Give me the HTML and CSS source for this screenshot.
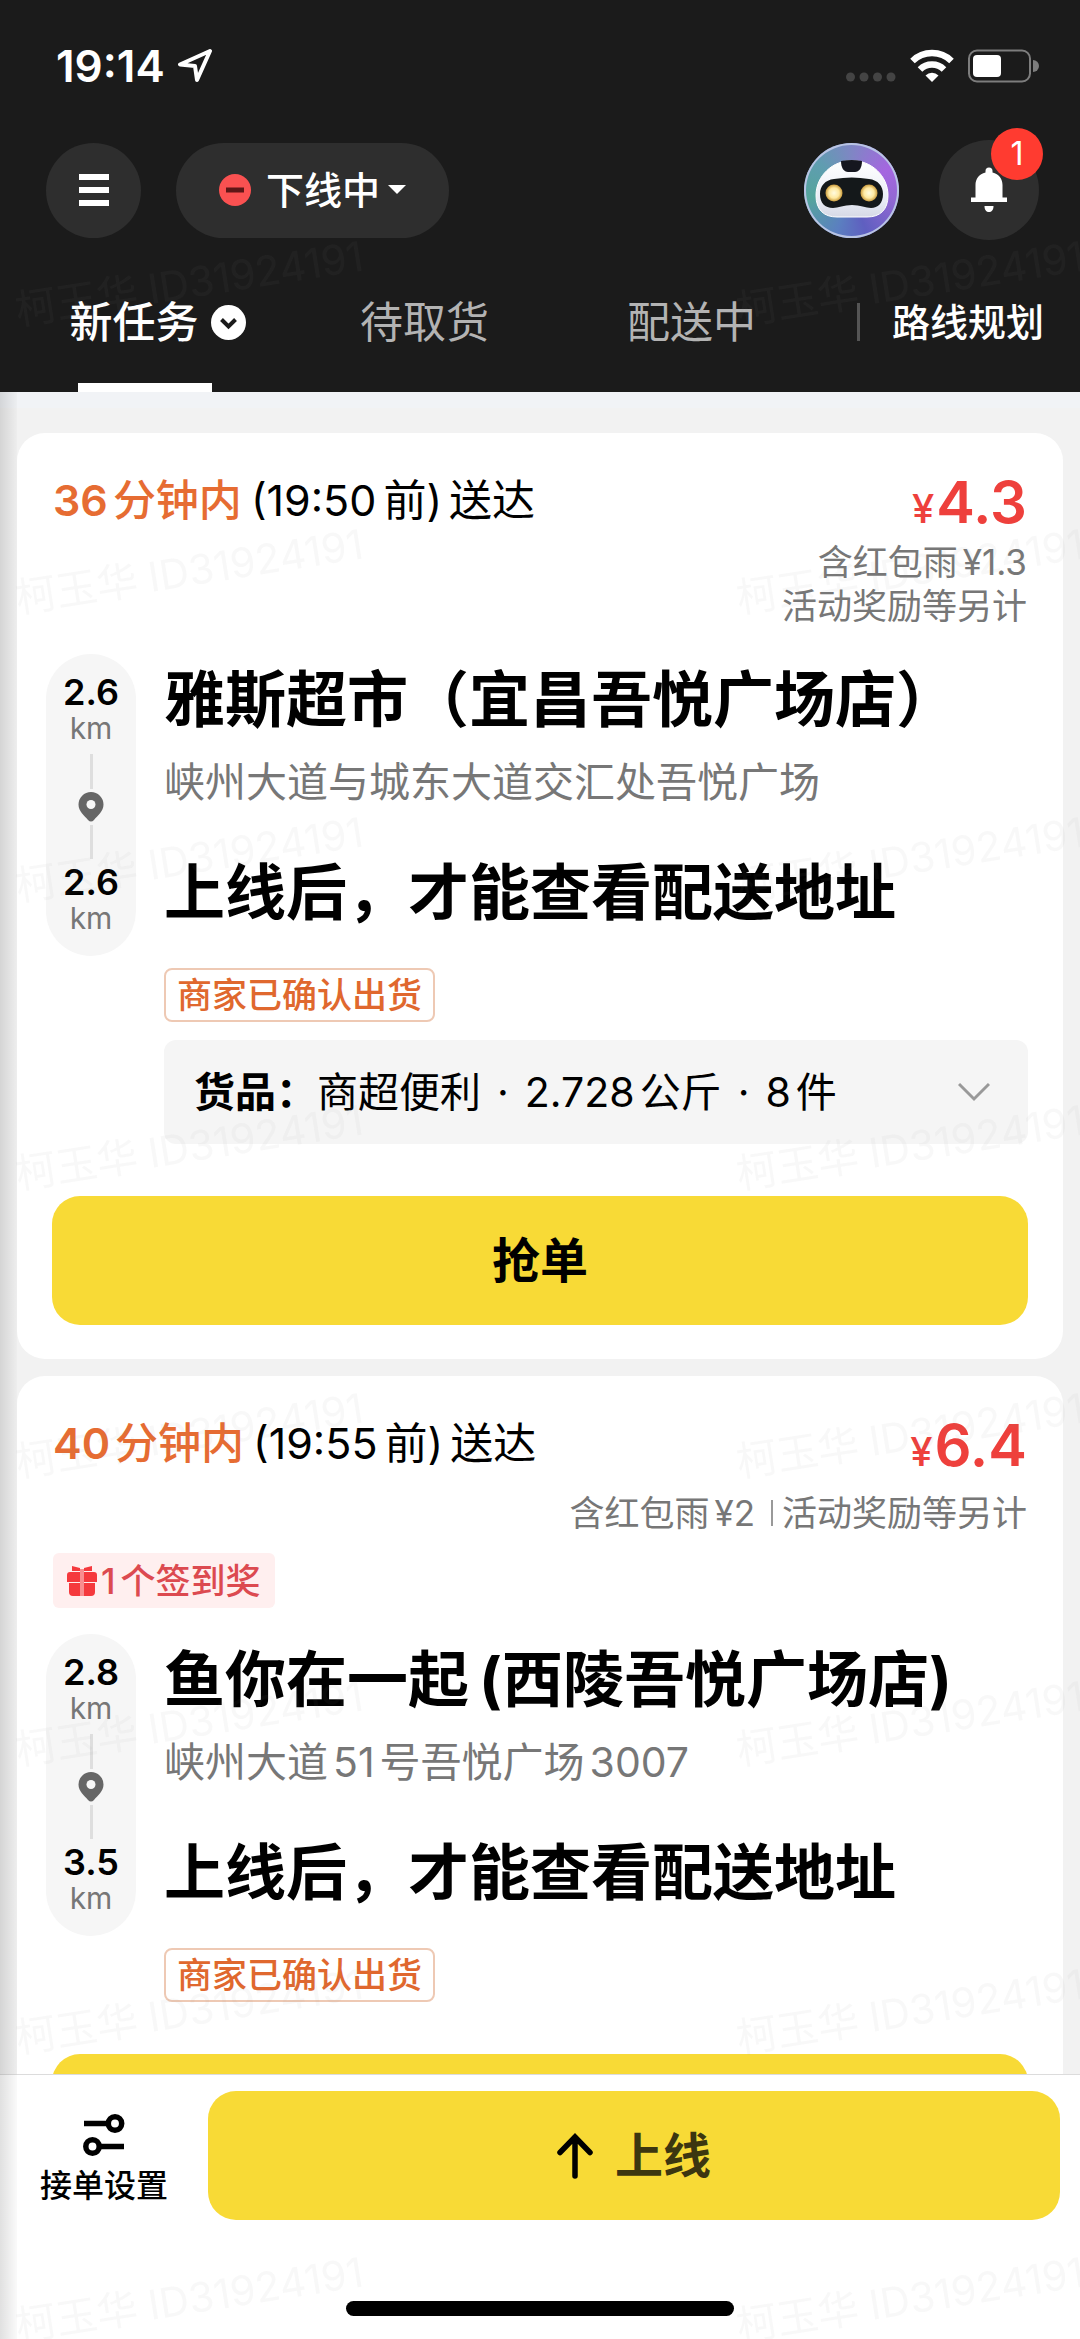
FILE: index.html
```html
<!DOCTYPE html>
<html lang="zh-CN">
<head>
<meta charset="utf-8">
<meta name="viewport" content="width=device-width, initial-scale=1">
<title>新任务</title>
<link rel="stylesheet" href="styles.css">
</head>
<body>
<header class="header">
  <div class="status">
    <span class="status-time">19:14</span>
    <svg class="status-location" width="36" height="34" viewBox="0 0 36 34" fill="none" stroke="#fff" stroke-width="4" stroke-linejoin="round" aria-hidden="true"><path d="M33 2 3 15.500l15 1.500 2 14z"/></svg>
    <svg class="status-signal" width="50" height="34" viewBox="0 0 50 34" fill="#444" aria-hidden="true"><circle cx="4.500" cy="28" r="4.500"/><circle cx="18" cy="28" r="4.500"/><circle cx="31.500" cy="28" r="4.500"/><circle cx="45" cy="28" r="4.500"/></svg>
    <svg width="44" height="34" viewBox="0 0 44 34" fill="none" stroke="#fff" stroke-width="6.500" aria-hidden="true"><path d="M2.500 12a28 28 0 0 1 39 0"/><path d="M10 20.500a17 17 0 0 1 24 0"/><path d="M22 33l-6.500-6.500a9.200 9.200 0 0 1 13 0z" fill="#fff" stroke="none"/></svg>
    <svg width="72" height="34" viewBox="0 0 72 34" aria-hidden="true"><rect x="1" y="1.500" width="61" height="31" rx="8" fill="none" stroke="#7d7d7d" stroke-width="2"/><rect x="5" y="6" width="28" height="22" rx="4" fill="#fff"/><path d="M65 11a6 6 0 0 1 0 12z" fill="#7d7d7d"/></svg>
  </div>
  <div class="toolbar">
    <button class="menu" type="button" aria-label="菜单">
      <svg width="30" height="34" viewBox="0 0 30 34" fill="#fff"><path d="M0 1h30v6H0zM0 14h30v6H0zM0 27h30v6H0z"/></svg>
    </button>
    <label class="state">
      <svg width="32" height="32" viewBox="0 0 32 32" aria-hidden="true"><circle cx="16" cy="16" r="16" fill="#fa5151"/><rect x="7" y="13.500" width="18" height="5" fill="#5e1717"/></svg>
      <select class="state-select" aria-label="接单状态"><option>下线中</option><option>上线中</option></select>
      <svg width="18" height="10" viewBox="0 0 18 10" fill="#fff" aria-hidden="true"><path d="M0 0h18L9 9z"/></svg>
    </label>
    <button class="robot" type="button" aria-label="智能助手">
      <svg width="95" height="95" viewBox="0 0 95 95">
        <defs>
          <linearGradient id="shell" x1="0" y1="0" x2="0" y2="1"><stop offset="0" stop-color="#ffffff"/><stop offset=".7" stop-color="#e9ecf5"/><stop offset="1" stop-color="#d6d9e6"/></linearGradient>
          <radialGradient id="eye"><stop offset="0" stop-color="#fffbe0"/><stop offset=".6" stop-color="#ffe9a0"/><stop offset="1" stop-color="#c99a3c"/></radialGradient>
        </defs>
        <path d="M48 17.500c19 0 36 15 36 35C84 67 76 74 63 74H33C20 74 12 67 12 52.500c0-20 17-35 36-35z" fill="url(#shell)" stroke="#fff"/>
        <path d="M37 18q11-2 21 0c0 7-3 11-7 11h-7c-4 0-7-4-7-11z" fill="#15161f"/>
        <path d="M30 36q18-3 35 0c9 1 14 7 14 15 0 9-5 14-12 14-5 0-11-3-19-3s-14 3-19 3c-8 0-13-5-13-14 0-8 5-14 14-15z" fill="#14181a"/>
        <circle cx="30" cy="50" r="8.500" fill="url(#eye)"/><circle cx="65" cy="50" r="8.500" fill="url(#eye)"/>
      </svg>
    </button>
    <button class="bell" type="button" aria-label="通知，1 条未读">
      <svg width="36" height="46" viewBox="0 0 36 46" fill="#fff"><path d="M14.500 4a3.500 3.500 0 0 1 7 0v1.500C28 7 31.500 12 31.500 18v12.500H36V35H0v-4.500h4.500V18C4.500 12 8 7 14.500 5.500zM13.500 39h9c0 4-2 6-4.500 6s-4.500-2-4.500-6z"/></svg>
      <span class="bell-count">1</span>
    </button>
  </div>
  <nav class="tabs">
    <a class="tab tab-active" href="#new" aria-current="page">
      <span class="tab-label">新任务
        <svg width="35" height="35" viewBox="0 0 35 35" aria-hidden="true"><circle cx="17.500" cy="17.500" r="17.500" fill="#fff"/><path d="M10.500 14.500l7 7 7-7" fill="none" stroke="#1b1b1b" stroke-width="4"/></svg>
      </span>
    </a>
    <a class="tab" href="#pickup"><span class="tab-label">待取货</span></a>
    <a class="tab" href="#delivering"><span class="tab-label">配送中</span></a>
    <a class="planner" href="#route">路线规划</a>
  </nav>
</header>

<main class="list">
  <article class="card">
    <div class="head">
      <p class="deadline"><strong class="remain"><span class="num-lead">36</span>分钟内</strong><span class="by">(19:50</span>前<span class="close">)</span>送达</p>
      <div class="pay">
        <p class="price"><small class="yen">¥</small>4.3</p>
        <p class="note">含红包雨<span class="num-tail">¥1.3</span></p>
        <p class="note">活动奖励等另计</p>
      </div>
    </div>
    <div class="route">
      <div class="track">
        <b class="km">2.6</b><span class="unit">km</span>
        <div class="leg"><i class="line"></i><svg width="26" height="30" viewBox="0 0 26 30" aria-hidden="true"><path d="M13 0a12.500 12.500 0 0 1 12.500 12.500c0 7-6 11-9.500 15.500q-3 3-6 0C6.500 23.500.5 19.500.5 12.500A12.500 12.500 0 0 1 13 0z" fill="#666"/><circle cx="13" cy="12.500" r="4.500" fill="#f7f7f7"/></svg><i class="line"></i></div>
        <b class="km">2.6</b><span class="unit">km</span>
      </div>
      <div class="stops">
        <h2 class="place">雅斯超市（宜昌吾悦广场店）</h2>
        <p class="address">峡州大道与城东大道交汇处吾悦广场</p>
        <h2 class="place place-to">上线后，才能查看配送地址</h2>
        <span class="tag">商家已确认出货</span>
        <button class="goods" type="button" aria-expanded="false">
          <span><b class="goods-label">货品：</b>商超便利<span class="dot">·</span><span class="num-lead">2.728</span>公斤<span class="dot">·</span><span class="num-lead">8</span>件</span>
          <svg width="32" height="20" viewBox="0 0 32 20" fill="none" stroke="#999" stroke-width="3" aria-hidden="true"><path d="M1 2l15 15L31 2"/></svg>
        </button>
      </div>
    </div>
    <button class="primary grab" type="button">抢单</button>
  </article>

  <article class="card">
    <div class="head">
      <p class="deadline"><strong class="remain"><span class="num-lead">40</span>分钟内</strong><span class="by">(19:55</span>前<span class="close">)</span>送达</p>
      <div class="pay">
        <p class="price"><small class="yen">¥</small>6.4</p>
        <p class="note note-row"><span>含红包雨<span class="num-tail">¥2</span></span><i class="note-rule"></i><span>活动奖励等另计</span></p>
      </div>
    </div>
    <div class="perk">
      <svg width="30" height="30" viewBox="0 0 30 30" fill="#f5393d" aria-hidden="true"><path d="M5 0l8 2v3H5zM25 0l-8 2v3h8zM3 6h10v10H0V9q0-3 3-3zM17 6h10q3 0 3 3v7H17zM2 17h11v13H6q-4 0-4-4zM17 17h11v9q0 4-4 4h-7z"/><path d="M13 3h4v27h-4z" fill="#f98d8f"/></svg>
      <span><span class="num-lead">1</span>个签到奖</span>
    </div>
    <div class="route">
      <div class="track">
        <b class="km">2.8</b><span class="unit">km</span>
        <div class="leg"><i class="line"></i><svg width="26" height="30" viewBox="0 0 26 30" aria-hidden="true"><path d="M13 0a12.500 12.500 0 0 1 12.500 12.500c0 7-6 11-9.500 15.500q-3 3-6 0C6.500 23.500.5 19.500.5 12.500A12.500 12.500 0 0 1 13 0z" fill="#666"/><circle cx="13" cy="12.500" r="4.500" fill="#f7f7f7"/></svg><i class="line"></i></div>
        <b class="km">3.5</b><span class="unit">km</span>
      </div>
      <div class="stops">
        <h2 class="place">鱼你在一起<span class="paren">(</span>西陵吾悦广场店)</h2>
        <p class="address">峡州大道<span class="num">51</span>号吾悦广场<span class="num-tail">3007</span></p>
        <h2 class="place place-to">上线后，才能查看配送地址</h2>
        <span class="tag">商家已确认出货</span>
      </div>
    </div>
    <button class="primary grab" type="button" aria-label="抢单"></button>
  </article>
</main>

<footer class="footer">
  <div class="actions">
    <button class="settings" type="button">
      <svg width="42" height="42" viewBox="0 0 42 42" fill="none" stroke="#000" stroke-width="5.500" aria-hidden="true"><path d="M1 9.500h23M18 32.500h23"/><circle cx="32" cy="9.500" r="6.700"/><circle cx="9.500" cy="32.500" r="6.700"/></svg>
      <span>接单设置</span>
    </button>
    <button class="primary online" type="button">
      <svg width="36" height="46" viewBox="0 0 36 46" fill="none" stroke="#000" stroke-width="5.500" stroke-linecap="round" aria-hidden="true"><path d="M18 43V4M3 19.500L18 4l15 15.500"/></svg>
      <span>上线</span>
    </button>
  </div>
  <div class="home-bar"></div>
</footer>

<div class="watermark" aria-hidden="true">
  <svg width="100%" height="100%">
    <defs>
      <pattern id="mark" width="721" height="288" patternUnits="userSpaceOnUse">
        <text class="watermark-text" transform="translate(18 135) rotate(-9)">柯玉华 ID31924191</text>
      </pattern>
    </defs>
    <rect width="100%" height="100%" fill="url(#mark)"/>
  </svg>
</div>
<div class="edge"></div>
</body>
</html>
```
FILE: styles.css
```css
* { box-sizing: border-box; }

html, body { height: 100%; }

body {
  margin: 0;
  position: relative;
  display: flex;
  flex-direction: column;
  overflow: hidden;
  background: #f2f2f2;
  color: #000;
  font-family: Inter, "Noto Sans CJK SC", sans-serif;
}

p, h2 { margin: 0; }

button, select {
  border: 0;
  padding: 0;
  background: none;
  color: inherit;
  font: inherit;
}

a { color: inherit; text-decoration: none; }

svg { display: block; flex: none; }

/* Header */
.header { flex: none; background: #1b1b1b; color: #fff; }

.status {
  display: flex;
  align-items: center;
  height: 132px;
  padding: 0 40px 0 56px;
}
.status-time { font-size: 44px; font-weight: 600; line-height: 52px; }
.status-location { margin-left: 12px; }
.status-signal { margin-left: auto; margin-right: 14px; }
.status svg:last-child { margin-left: 14px; }

.toolbar {
  display: flex;
  align-items: center;
  padding: 8px 41px 0 46px;
}
.menu, .bell {
  display: flex;
  align-items: center;
  justify-content: center;
  border-radius: 50%;
  background: #2e2e2e;
}
.menu { width: 95px; height: 95px; }
.state {
  display: flex;
  align-items: center;
  gap: 15px;
  height: 95px;
  margin-left: 35px;
  padding: 0 43px;
  border-radius: 48px;
  background: #2e2e2e;
}
.state-select {
  appearance: none;
  margin-right: -8px;
  font-size: 38px;
  font-weight: 500;
  line-height: 52px;
}
.robot {
  width: 95px;
  height: 95px;
  margin-left: auto;
  border-radius: 50%;
  background: conic-gradient(#7f86c4, #a566e0 60deg, #9468d4 100deg, #5f5fc0 160deg, #5b7fc0 200deg, #55a59c 260deg, #5f9db0 310deg, #7f86c4);
  box-shadow: inset 0 0 0 2px #b9c4e4;
}
.bell {
  position: relative;
  width: 100px;
  height: 100px;
  margin-left: 40px;
}
.bell-count {
  position: absolute;
  top: -12px;
  right: -4px;
  width: 52px;
  height: 52px;
  border-radius: 50%;
  background: #ff3b30;
  font-size: 32px;
  line-height: 52px;
  text-align: center;
}

.tabs { display: flex; height: 152px; padding-left: 24px; }
.tab {
  flex: 1;
  display: flex;
  flex-direction: column;
  justify-content: space-between;
  padding-top: 52px;
  color: #b3b3b3;
  font-size: 43px;
  line-height: 60px;
}
.tab-label {
  display: flex;
  align-items: center;
  justify-content: center;
  gap: 12px;
}
.tab-active { color: #fff; font-weight: 500; }
.tab-active::after {
  content: "";
  width: 50%;
  height: 9px;
  margin-left: 54px;
  background: #fff;
}
.planner {
  display: flex;
  align-items: center;
  height: 60px;
  margin-top: 52px;
  padding-right: 36px;
  font-size: 38px;
  font-weight: 500;
  line-height: 60px;
}
.planner::before {
  content: "";
  width: 3px;
  height: 38px;
  margin: 0 32px;
  background: #555;
}

/* Task list */
.list {
  flex: 1;
  min-height: 0;
  display: flex;
  flex-direction: column;
  gap: 17px;
  padding: 41px 17px 0;
  overflow-y: auto;
  scrollbar-width: none;
  background: linear-gradient(#f1f3f6 16px, #f2f2f2 16px);
}
.card {
  flex: none;
  padding: 37px 0 34px;
  border-radius: 28px;
  background: #fff;
}
.head {
  display: flex;
  justify-content: space-between;
  padding: 0 36px;
}
.deadline { font-size: 43px; line-height: 60px; }
.remain { color: #e66c32; font-weight: 500; }
.num-lead { margin-right: 5px; }
.remain .num-lead { font-weight: 600; }
.num-tail { margin-left: 5px; }
.num { margin: 0 5px; }
.by { margin: 0 7px 0 9px; }
.close { margin-right: 7px; }
.pay { text-align: right; }
.price {
  color: #ee403c;
  font-size: 58px;
  font-weight: 600;
  line-height: 64px;
}
.yen { margin-right: 2px; font-size: 40px; font-weight: 500; line-height: 40px; }
.note { color: #777; font-size: 35px; line-height: 44px; }
.price + .note { margin-top: 6px; }
.price + .note-row {
  display: flex;
  align-items: center;
  margin-top: 14px;
}
.note-rule { width: 2px; height: 26px; margin: 0 9px 0 16px; background: #999; }

.perk {
  display: flex;
  align-items: center;
  gap: 4px;
  width: fit-content;
  height: 55px;
  margin: 18px 0 0 36px;
  padding: 0 14px;
  border-radius: 6px;
  background: #ffefef;
  color: #dc4a50;
  font-size: 35px;
  font-weight: 500;
  line-height: 44px;
}

.route {
  display: flex;
  align-items: flex-start;
  gap: 28px;
  padding: 26px 35px 0 29px;
}
.track {
  flex: none;
  display: flex;
  flex-direction: column;
  align-items: center;
  width: 90px;
  height: 302px;
  padding: 20px 0;
  border-radius: 45px;
  background: #f6f6f6;
}
.km { font-size: 36px; font-weight: 600; line-height: 36px; }
.unit { color: #777; font-size: 30px; line-height: 36px; }
.leg {
  flex: 1;
  display: flex;
  flex-direction: column;
  align-items: center;
  gap: 3px;
  padding: 8px 0 5px;
}
.line { flex: 1; width: 3px; background: #dedede; }

.stops { flex: 1; min-width: 0; padding-top: 6px; }
.place { font-size: 61px; font-weight: 700; line-height: 80px; white-space: nowrap; }
.paren { margin-left: 10px; }
.address { margin-top: 17px; color: #777; font-size: 41px; line-height: 50px; }
.place-to { margin-top: 46px; }
.tag {
  display: block;
  width: fit-content;
  margin-top: 35px;
  padding: 0 11px;
  border: 2px solid #eec9b4;
  border-radius: 8px;
  color: #e0682e;
  font-size: 35px;
  font-weight: 500;
  line-height: 50px;
}
.goods {
  display: flex;
  align-items: center;
  justify-content: space-between;
  width: 100%;
  height: 104px;
  margin-top: 18px;
  padding: 0 38px 0 30px;
  border-radius: 12px;
  background: #f5f5f5;
  font-size: 41px;
  line-height: 52px;
}
.goods-label { font-weight: 700; }
.dot { margin: 0 16px; }

.primary {
  height: 129px;
  border-radius: 28px;
  background: #f8da36;
  font-size: 48px;
  font-weight: 700;
  line-height: 60px;
}
.grab {
  display: block;
  width: calc(100% - 70px);
  margin: 52px 35px 0;
}

/* Bottom bar */
.footer {
  flex: none;
  padding: 16px 0 23px;
  border-top: 1px solid #dcdcdc;
  background: #fff;
}
.actions { display: flex; padding-right: 20px; }
.settings {
  flex: none;
  display: flex;
  flex-direction: column;
  align-items: center;
  gap: 10px;
  width: 208px;
  padding-top: 23px;
  font-size: 32px;
  font-weight: 500;
  line-height: 40px;
}
.online {
  flex: 1;
  display: flex;
  align-items: center;
  justify-content: center;
  gap: 22px;
  color: #3c3610;
}
.home-bar {
  width: 36%;
  height: 15px;
  margin: 81px auto 0;
  border-radius: 8px;
  background: #000;
}

/* Overlays */
.watermark {
  position: absolute;
  inset: 190px 0 0;
  z-index: 1;
  overflow: hidden;
  pointer-events: none;
}
.watermark-text { fill: rgba(128, 128, 128, 0.06); font-size: 41px; }
.edge {
  position: absolute;
  top: 392px;
  bottom: 0;
  left: 0;
  z-index: 1;
  width: 17px;
  background: linear-gradient(90deg, rgba(0, 0, 0, 0.12), rgba(0, 0, 0, 0.02));
  pointer-events: none;
}
```
